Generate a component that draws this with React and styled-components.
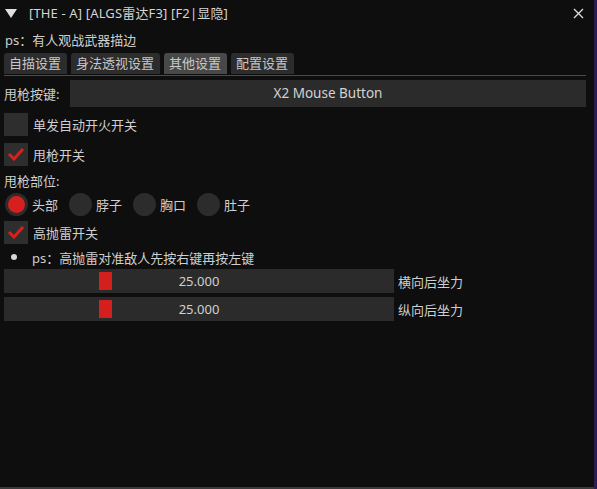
import React from 'react';
import styled, { createGlobalStyle } from 'styled-components';

const GlobalStyle = createGlobalStyle`
  html, body {
    margin: 0;
    padding: 0;
    background: #2a1d52;
  }
  body {
    font-family: "Noto Sans", "Noto Sans CJK SC", sans-serif;
    font-size: 13px;
    color: #cfcfcf;
  }
`;

const Window = styled.div`
  width: 594px;
  height: 487px;
  background: #0e0e0e;
  border-bottom: 2px solid #3a3a3a;
  display: flex;
  flex-direction: column;
  overflow: hidden;
`;

const TitleBar = styled.div`
  height: 26px;
  display: flex;
  align-items: center;
  padding: 0 10px 0 5px;
  gap: 12px;
`;

const TitleText = styled.div`
  flex: 1;
  line-height: 18px;
  color: #d4d4d4;
  letter-spacing: 0.15px;
`;

const Body = styled.div`
  display: flex;
  flex-direction: column;
  gap: 4px;
  padding: 0 4px;
`;

const Note = styled.div`
  height: 18px;
  line-height: 18px;
  margin-top: 5px;
  padding-left: 1px;
`;

const TabBar = styled.div`
  display: flex;
  gap: 4px;
  border-bottom: 1px solid #4a4a4a;
  padding-bottom: 1px;
  margin-right: 4px;
`;

const Tab = styled.div`
  height: 21px;
  line-height: 21px;
  padding: 0 6px 0 5px;
  border-radius: 3px 3px 0 0;
  background: ${p => (p.$active ? '#484848' : '#2c2c2c')};
  color: #c8c8c8;
`;

const Row = styled.div`
  display: flex;
  align-items: center;
  height: ${p => p.$h || 26}px;
  gap: ${p => p.$gap || 5}px;
`;

const FieldLabel = styled.div`
  width: 61px;
  flex-shrink: 0;
`;

const KeyInput = styled.div`
  flex: 1;
  height: 27px;
  line-height: 27px;
  background: #2b2b2b;
  text-align: center;
  color: #d2d2d2;
  margin-right: 4px;
  font-size: 13.5px;
`;

const Box = styled.div`
  width: 24px;
  height: 23px;
  background: #2e2e2e;
  display: flex;
  align-items: center;
  justify-content: center;
  flex-shrink: 0;
`;

const RadioGroup = styled.div`
  display: flex;
  align-items: center;
`;

const RadioItem = styled.div`
  display: flex;
  align-items: center;
  gap: 4px;
  width: 64px;
`;

const Radio = styled.div`
  width: 23px;
  height: 23px;
  border-radius: 50%;
  background: #2c2c2c;
  display: flex;
  align-items: center;
  justify-content: center;
  margin-left: 1px;

  &::after {
    content: '';
    width: 17px;
    height: 17px;
    border-radius: 50%;
    background: ${p => (p.$on ? '#d81f1f' : 'transparent')};
  }
`;

const Bullet = styled.span`
  width: 6px;
  height: 6px;
  border-radius: 50%;
  background: #d6d6d6;
  margin: 0 10px 0 7px;
`;

const SliderFrame = styled.div`
  position: relative;
  width: 390px;
  height: 24px;
  background: #2b2b2b;
  display: flex;
  align-items: center;
  justify-content: center;
  color: #d0d0d0;
  flex-shrink: 0;
`;

const Grab = styled.div`
  position: absolute;
  top: 3px;
  width: 13px;
  height: 18px;
  background: #d41f1f;
`;

const Check = () => (
  <svg width="18" height="14" viewBox="0 0 18 14">
    <path d="M2 7 L7 12 L16 2" fill="none" stroke="#d81f1f" strokeWidth="3" />
  </svg>
);

const CheckRow = ({ on, label }) => (
  <Row $h={26}>
    <Box>{on && <Check />}</Box>
    <span>{label}</span>
  </Row>
);

const Slider = ({ value, pos, label }) => (
  <Row $h={24} $gap={4}>
    <SliderFrame>
      <Grab style={{ left: pos }} />
      <span>{value}</span>
    </SliderFrame>
    <span>{label}</span>
  </Row>
);

const parts = ['头部', '脖子', '胸口', '肚子'];

export default function App() {
  return (
    <>
      <GlobalStyle />
      <Window>
        <TitleBar>
          <svg width="12" height="10" viewBox="0 0 12 10">
            <polygon points="0,1 12,1 6,10" fill="#e0e0e0" />
          </svg>
          <TitleText>[THE - A] [ALGS雷达F3] [F2|显隐]</TitleText>
          <svg width="11" height="11" viewBox="0 0 11 11">
            <path d="M1 1 L10 10 M10 1 L1 10" stroke="#d8d8d8" strokeWidth="1.4" />
          </svg>
        </TitleBar>
        <Body>
          <Note>ps：有人观战武器描边</Note>
          <TabBar>
            <Tab>自描设置</Tab>
            <Tab>身法透视设置</Tab>
            <Tab $active>其他设置</Tab>
            <Tab>配置设置</Tab>
          </TabBar>
          <Row $h={27} $gap={5}>
            <FieldLabel>甩枪按键:</FieldLabel>
            <KeyInput>X2 Mouse Button</KeyInput>
          </Row>
          <CheckRow label="单发自动开火开关" />
          <CheckRow on label="甩枪开关" />
          <Row $h={18}>甩枪部位:</Row>
          <Row $h={22}>
            <RadioGroup>
              {parts.map((p, i) => (
                <RadioItem key={p}>
                  <Radio $on={i === 0} />
                  <span>{p}</span>
                </RadioItem>
              ))}
            </RadioGroup>
          </Row>
          <CheckRow on label="高抛雷开关" />
          <Row $h={16} $gap={0}>
            <Bullet />
            <span>ps：高抛雷对准敌人先按右键再按左键</span>
          </Row>
          <Slider value="25.000" pos={95} label="横向后坐力" />
          <Slider value="25.000" pos={95} label="纵向后坐力" />
        </Body>
      </Window>
    </>
  );
}
